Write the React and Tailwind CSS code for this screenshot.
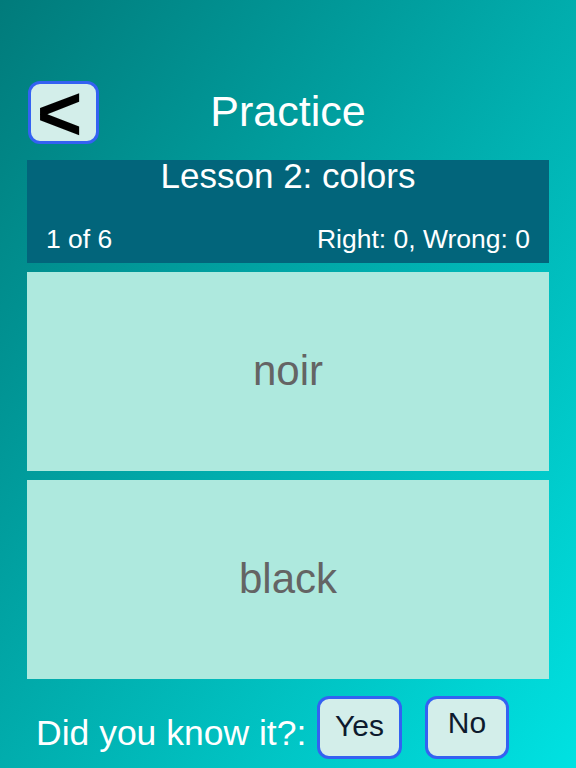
export default function App() {
  return (
    <div
      className="w-[576px] h-[768px] flex flex-col overflow-hidden bg-gradient-to-br from-[#017b7b] to-[#00e2e2] text-white"
      style={{ fontFamily: '"Liberation Sans", Arial, sans-serif' }}
    >
      <div className="mt-[81px] mx-[28px] h-[63px] flex items-center">
        <button className="w-[71px] h-[63px] rounded-[12px] border-[3px] border-[#3461f2] bg-[#d3eeea] flex items-center justify-center text-black font-bold text-[78px] leading-none pt-[1px] pr-[8px]">
          &lt;
        </button>
        <div className="flex-1 text-center text-[43px] leading-none pb-[2px]">Practice</div>
        <div className="w-[71px]" />
      </div>

      <div className="mt-[16px] mx-[27px] h-[103px] bg-[#02657b] flex flex-col">
        <div className="text-center text-[35px] leading-none -mt-[2px]">Lesson 2: colors</div>
        <div className="mt-auto mb-[11px] flex justify-between pl-[19px] pr-[19px] text-[26.5px] leading-none">
          <span>1 of 6</span>
          <span>Right: 0, Wrong: 0</span>
        </div>
      </div>

      <div className="mt-[9px] mx-[27px] h-[199px] bg-[#aee9de] flex items-center justify-center text-[#646464] text-[42px] leading-none pb-[2px]">
        noir
      </div>
      <div className="mt-[9px] mx-[27px] h-[199px] bg-[#aee9de] flex items-center justify-center text-[#646464] text-[42px] leading-none pb-[2px]">
        black
      </div>

      <div className="mt-[17px] flex items-center h-[63px]">
        <span className="ml-[36px] w-[281px] text-[35.5px] leading-none pt-[12px] whitespace-nowrap">Did you know it?:</span>
        <button className="w-[85px] h-[63px] rounded-[12px] border-[3px] border-[#3461f2] bg-[#d3eeea] text-[#0d1a2e] text-[30px] leading-none pb-[4px]">
          Yes
        </button>
        <button className="ml-[23px] w-[84px] h-[63px] rounded-[12px] border-[3px] border-[#3461f2] bg-[#d3eeea] text-[#0d1a2e] text-[30px] leading-none pb-[10px]">
          No
        </button>
      </div>
    </div>
  );
}
